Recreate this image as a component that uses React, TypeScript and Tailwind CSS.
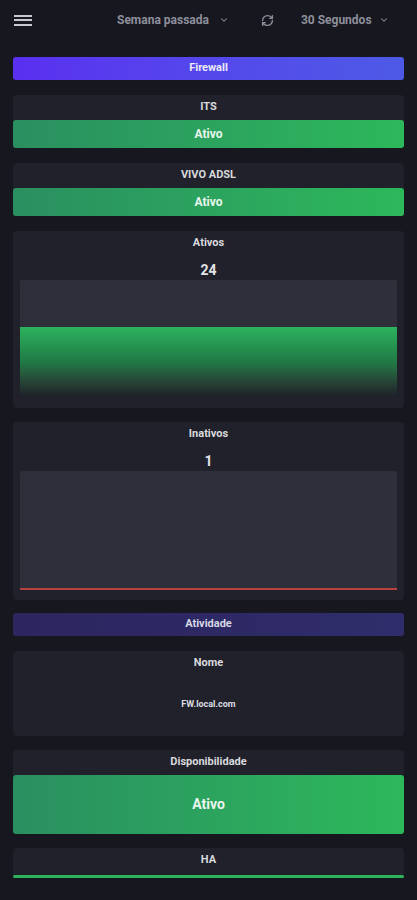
import { ChevronDown, RefreshCw } from "lucide-react";

function StatusBar({ tall }: { tall?: boolean }) {
  return (
    <div
      className={`flex items-center justify-center rounded-[3px] bg-gradient-to-r from-[#2a8f60] to-[#2db85a] font-bold text-[#e8f5ec] ${
        tall ? "h-[59px] text-[14px]" : "h-[28px] text-[12px]"
      }`}
    >
      Ativo
    </div>
  );
}

function Title({ children }: { children: React.ReactNode }) {
  return <div className="flex h-[25px] items-center justify-center text-[11px] font-bold text-[#d9d9de]">{children}</div>;
}

export default function App() {
  return (
    <div className="min-h-[900px] bg-[#17181f] pb-10 font-['Roboto',sans-serif]">
      <div className="flex h-[40px] items-center px-[14px]">
        <div className="flex h-[11px] w-[18px] flex-col justify-between">
          <span className="h-[2px] w-full bg-[#c8c8d0]" />
          <span className="h-[2px] w-full bg-[#c8c8d0]" />
          <span className="h-[2px] w-full bg-[#c8c8d0]" />
        </div>
        <div className="ml-[85px] flex items-center gap-[10px] text-[12px] font-bold text-[#8e8f9c]">
          Semana passada
          <ChevronDown className="h-[10px] w-[10px]" strokeWidth={2.5} />
        </div>
        <RefreshCw className="ml-[32px] h-[13px] w-[13px] text-[#8e8f9c]" strokeWidth={2.5} />
        <div className="ml-[27px] flex items-center gap-[7px] text-[12px] font-bold text-[#8e8f9c]">
          30 Segundos
          <ChevronDown className="h-[10px] w-[10px]" strokeWidth={2.5} />
        </div>
      </div>

      <div className="flex flex-col px-[13px] pt-[17px]">
        <div className="flex h-[23px] items-center justify-center rounded-[3px] bg-gradient-to-r from-[#5a2ff0] to-[#4d5ae6] text-[11px] font-bold text-[#ececf7]">
          Firewall
        </div>

        <div className="mt-[15px] rounded-[4px] bg-[#20212a]">
          <Title>ITS</Title>
          <StatusBar />
        </div>

        <div className="mt-[15px] rounded-[4px] bg-[#20212a]">
          <Title>VIVO ADSL</Title>
          <StatusBar />
        </div>

        <div className="mt-[15px] rounded-[4px] bg-[#20212a] px-[7px] pb-[11px]">
          <Title>Ativos</Title>
          <div className="pt-[4px] text-center text-[14px] font-bold leading-[20px] text-[#e4e4e8]">24</div>
          <div className="flex h-[117px] flex-col rounded-[2px] bg-[#2e2f3a]">
            <div className="h-[47px]" />
            <div className="flex-1 bg-gradient-to-b from-[#2db35d] via-[#1f7a45] to-[#1e2028]" />
          </div>
        </div>

        <div className="mt-[14px] rounded-[4px] bg-[#20212a] px-[7px] pb-[10px]">
          <Title>Inativos</Title>
          <div className="pt-[4px] text-center text-[14px] font-bold leading-[20px] text-[#e4e4e8]">1</div>
          <div className="flex h-[119px] flex-col justify-end rounded-[2px] bg-[#2e2f3a]">
            <div className="h-[2px] bg-[#b8423e]" />
          </div>
        </div>

        <div className="mt-[13px] flex h-[23px] items-center justify-center rounded-[3px] bg-gradient-to-r from-[#2c255f] to-[#2f2d6b] text-[11px] font-bold text-[#d8d8e6]">
          Atividade
        </div>

        <div className="mt-[15px] flex h-[85px] flex-col rounded-[4px] bg-[#20212a]">
          <Title>Nome</Title>
          <div className="flex flex-1 items-center justify-center pb-[2px] text-[9px] font-bold text-[#dcdce2]">FW.local.com</div>
        </div>

        <div className="mt-[14px] rounded-[4px] bg-[#20212a]">
          <Title>Disponibilidade</Title>
          <StatusBar tall />
        </div>

        <div className="mt-[14px] rounded-[4px] bg-[#20212a]">
          <Title>HA</Title>
          <div className="mt-[2px] h-[3px] rounded-[2px] bg-[#2db35d]" />
        </div>
      </div>
    </div>
  );
}
